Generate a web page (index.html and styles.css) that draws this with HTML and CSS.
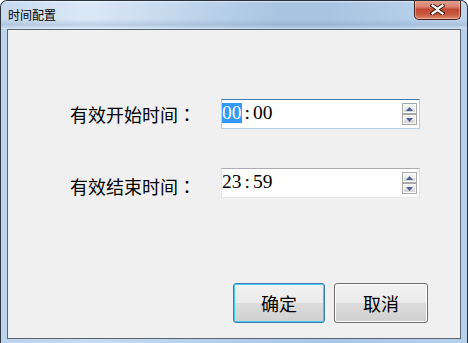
FILE: index.html
```html
<!DOCTYPE html>
<html>
<head>
<meta charset="utf-8">
<link rel="stylesheet" href="styles.css">
</head>
<body>
<div class="window">
  <div class="titlebar">
    <span class="title">时间配置</span>
    <div class="close">
      <svg width="15" height="11" viewBox="0 0 15 11">
        <path d="M2.5 1.5 L7.5 5 L12.5 1.5 M2.5 9.5 L7.5 6 L12.5 9.5" fill="none" stroke="#3a1a14" stroke-width="4.2" stroke-linecap="square"/>
        <path d="M2.5 1.5 L7.5 5 L12.5 1.5 M2.5 9.5 L7.5 6 L12.5 9.5" fill="none" stroke="#ffffff" stroke-width="2.2" stroke-linecap="square"/>
      </svg>
    </div>
  </div>
  <div class="client">
    <div class="form">
      <label class="label">有效开始时间<span class="fwcolon">：</span></label>
      <div class="spin focused">
        <div class="value"><span class="sel">00</span><span class="colon">:</span><span>00</span></div>
        <div class="arrows">
          <div class="arrow"><svg width="7" height="4" viewBox="0 0 7 4"><path d="M0 4 L3.5 0 L7 4 Z" fill="#4d5d96"/></svg></div>
          <div class="arrow"><svg width="7" height="4" viewBox="0 0 7 4"><path d="M0 0 L3.5 4 L7 0 Z" fill="#4d5d96"/></svg></div>
        </div>
      </div>
      <label class="label second">有效结束时间<span class="fwcolon">：</span></label>
      <div class="spin">
        <div class="value"><span>23</span><span class="colon">:</span><span>59</span></div>
        <div class="arrows">
          <div class="arrow"><svg width="7" height="4" viewBox="0 0 7 4"><path d="M0 4 L3.5 0 L7 4 Z" fill="#4d5d96"/></svg></div>
          <div class="arrow"><svg width="7" height="4" viewBox="0 0 7 4"><path d="M0 0 L3.5 4 L7 0 Z" fill="#4d5d96"/></svg></div>
        </div>
      </div>
    </div>
    <div class="buttons">
      <button class="btn default">确定</button>
      <button class="btn cancel">取消</button>
    </div>
  </div>
</div>
</body>
</html>
```

FILE: styles.css
```css
html, body {
  margin: 0;
  padding: 0;
  background: #ffffff;
  overflow: hidden;
}

.window {
  box-sizing: border-box;
  width: 468px;
  height: 343px;
  border: 1px solid #2c3440;
  border-bottom: none;
  border-radius: 7px 7px 0 0;
  background: linear-gradient(90deg, #bcd3ec 0%, #c7dcf2 20%, #b4cfea 45%, #a9c6e4 70%, #b7d1ec 100%);
  display: flex;
  flex-direction: column;
  font-family: "Noto Sans CJK SC", "Noto Sans", sans-serif;
  overflow: hidden;
}

.titlebar {
  height: 28px;
  display: flex;
  align-items: flex-start;
  padding-left: 7px;
  background:
    linear-gradient(180deg, rgba(255,255,255,0.55) 0px, rgba(255,255,255,0) 2px, rgba(255,255,255,0) 18px, rgba(110,140,175,0.25) 24px, rgba(255,255,255,0.3) 28px),
    linear-gradient(90deg, rgba(255,255,255,0.15) 0%, rgba(255,255,255,0.35) 18%, rgba(150,175,205,0.2) 60%, rgba(255,255,255,0.1) 100%);
}

.title {
  font-size: 12px;
  line-height: 16px;
  padding-top: 6px;
  color: #000000;
}

.close {
  margin-left: auto;
  margin-right: 6px;
  margin-top: -1px;
  box-sizing: border-box;
  width: 47px;
  height: 20px;
  border: 1px solid #4a1f18;
  border-top: none;
  border-radius: 0 0 5px 5px;
  background: linear-gradient(180deg, #e6a292 0%, #d8826f 35%, #c24a34 50%, #c8573f 75%, #dc8a6c 100%);
  box-shadow: inset 0 0 0 1px rgba(255,220,210,0.45);
  display: flex;
  align-items: center;
  justify-content: center;
}

.client {
  box-sizing: border-box;
  height: 310px;
  margin: 0 6px;
  border: 1px solid #5a6572;
  background: #f0f0f0;
  display: flex;
  flex-direction: column;
}

.form {
  display: grid;
  grid-template-columns: 151px 199px;
  grid-template-rows: 30px 30px;
  row-gap: 39px;
  padding-top: 69px;
  padding-left: 62px;
}

.label {
  font-size: 18px;
  line-height: 24px;
  color: #000000;
  align-self: center;
  white-space: nowrap;
}

.fwcolon {
  font-family: "Noto Sans CJK TC", "Noto Sans CJK SC", sans-serif;
}

.label.second {
  margin-top: 5px;
}

.spin {
  box-sizing: border-box;
  height: 30px;
  background: #ffffff;
  border: 1px solid #abadb3;
  border-left-color: #e2e3ea;
  border-right-color: #dbdfe6;
  border-bottom-color: #e3e9ef;
  display: flex;
}

.spin.focused {
  border-color: #3d7bad;
  border-left-color: #b5cfe7;
  border-right-color: #b5cfe7;
  border-bottom-color: #b5cfe7;
}

.value {
  flex: 1;
  padding-top: 3px;
  font-family: "Liberation Serif", "DejaVu Serif", serif;
  font-size: 19.5px;
  line-height: 20px;
  color: #000000;
  display: flex;
  align-items: flex-start;
}

.sel {
  background: #3399ff;
  color: #ffffff;
}

.colon {
  padding: 0 3px;
}

.arrows {
  display: flex;
  flex-direction: column;
  gap: 0;
  margin: 3px 2px 0 0;
}

.arrow {
  box-sizing: border-box;
  width: 15px;
  height: 11px;
  border: 1px solid #a9a9a9;
  background: linear-gradient(180deg, #f6f6f6 0%, #ececec 50%, #dedede 51%, #d4d4d4 100%);
  box-shadow: inset 0 0 0 1px #fbfbfb;
  display: flex;
  align-items: center;
  justify-content: center;
}

.buttons {
  margin-top: auto;
  display: flex;
  justify-content: flex-end;
  gap: 9px;
  padding: 0 32px 15px 0;
}

.btn {
  box-sizing: border-box;
  height: 40px;
  width: 94px;
  padding: 0;
  font-family: "Noto Sans CJK SC", "Noto Sans", sans-serif;
  font-size: 18px;
  line-height: 24px;
  color: #000000;
  border: 1px solid #707070;
  border-radius: 3px;
  background: linear-gradient(180deg, #f2f2f2 0%, #ebebeb 49%, #dddddd 50%, #cfcfcf 100%);
  box-shadow: inset 0 0 0 1px #fcfcfc;
}

.btn.default {
  width: 92px;
  border-color: #3c7fb1;
  box-shadow: inset 0 0 0 1px #48c6f3;
}
```
